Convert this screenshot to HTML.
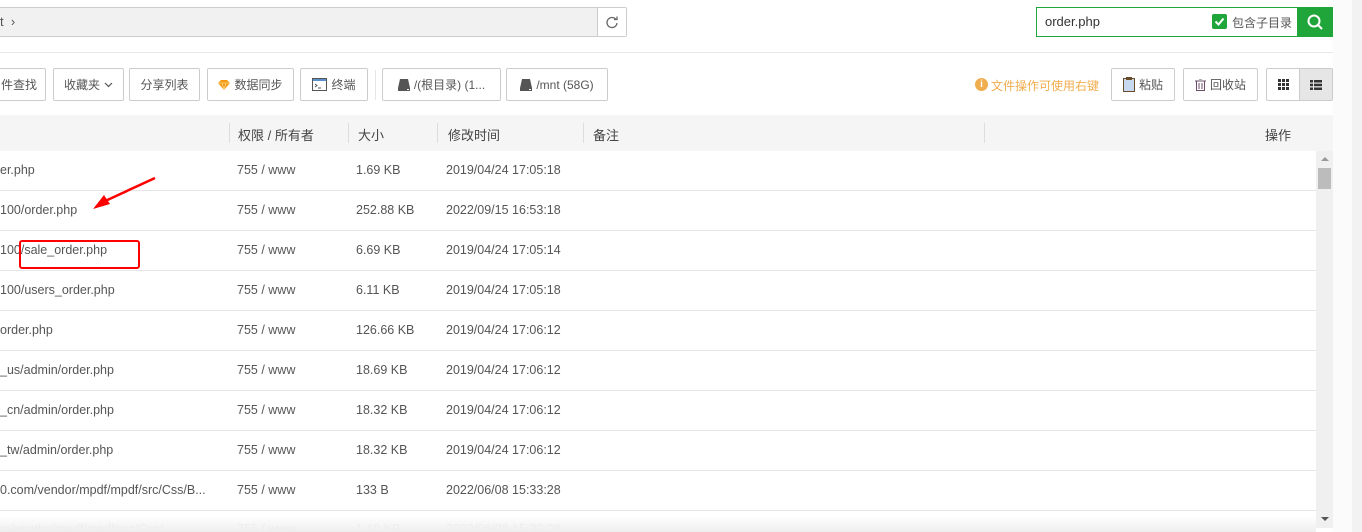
<!DOCTYPE html>
<html><head><meta charset="utf-8"><style>
*{box-sizing:border-box;margin:0;padding:0}
html,body{width:1362px;height:532px;overflow:hidden}
body{background:#fff;font-family:"Liberation Sans","Noto Sans CJK SC",sans-serif;font-size:12px;color:#555;position:relative}
.a{position:absolute}
.btn{position:absolute;top:68px;height:33px;border:1px solid #ccc;border-radius:2px;background:#fff;display:flex;align-items:center;justify-content:center;font-size:12px;color:#555;white-space:nowrap;gap:4px}
.row{position:absolute;left:0;width:1316px;height:40px;border-bottom:1px solid #e6e6e6;font-size:12.5px;color:#555}
.row span{position:absolute;top:12px;white-space:nowrap}
.hdr{position:absolute;top:125px;font-size:13px;color:#444}
.vs{position:absolute;top:123px;width:1px;height:20px;background:#ddd}
</style></head><body>
<div class="a" style="left:-2px;top:7px;width:629px;height:30px;background:#f1f1f1;border:1px solid #ccc;border-radius:2px"></div>
<div class="a" style="left:0;top:14px;font-size:13px;color:#555">t&nbsp;&nbsp;›</div>
<div class="a" style="left:597px;top:8px;width:29px;height:28px;background:#fff;border-left:1px solid #ccc;display:flex;align-items:center;justify-content:center">
<svg width="14" height="14" viewBox="0 0 14 14"><path d="M11 4.5A5 5 0 1 0 12 8" fill="none" stroke="#666" stroke-width="1.3"/><path d="M9 4.5h3V1.5" fill="none" stroke="#666" stroke-width="1.3"/></svg></div>
<div class="a" style="left:1036px;top:7px;width:262px;height:30px;border:1px solid #20a53a;background:#fff"></div>
<div class="a" style="left:1045px;top:14px;font-size:13px;color:#333">order.php</div>
<div class="a" style="left:1212px;top:14px;width:15px;height:15px;background:#20a53a;border-radius:2px"><svg width="15" height="15"><path d="M3.5 7.5l3 3 5-6" fill="none" stroke="#fff" stroke-width="2"/></svg></div>
<div class="a" style="left:1232px;top:14px;font-size:12px;color:#555">包含子目录</div>
<div class="a" style="left:1297px;top:7px;width:36px;height:30px;background:#20a53a"><svg width="36" height="30"><circle cx="17" cy="14" r="5.5" fill="none" stroke="#fff" stroke-width="2"/><path d="M21 18l4 4" stroke="#fff" stroke-width="2"/></svg></div>
<div class="a" style="left:0;top:52px;width:1333px;height:1px;background:#e8e8e8"></div>
<div class="btn" style="left:-10px;width:56px;justify-content:flex-end;padding-right:8px">件查找</div>
<div class="btn" style="left:53px;width:71px">收藏夹 <svg width="9" height="6"><path d="M1 1l3.5 3.5L8 1" fill="none" stroke="#555" stroke-width="1.2"/></svg></div>
<div class="btn" style="left:129px;width:71px">分享列表</div>
<div class="btn" style="left:207px;width:87px"><svg width="12" height="10"><path d="M0 3l3-3h6l3 3-6 7z" fill="#f39c12"/><path d="M0 3h12M4 3l2 7 2-7" stroke="#fbd38d" stroke-width=".8" fill="none"/></svg>数据同步</div>
<div class="btn" style="left:300px;width:68px"><svg width="15" height="13"><rect x=".5" y=".5" width="14" height="12" fill="#fff" stroke="#555"/><rect x="1" y="1" width="13" height="2" fill="#5b8fc8"/><path d="M3 6l2 1.5L3 9M6 10h3" stroke="#555" fill="none"/></svg> 终端</div>
<div class="a" style="left:375px;top:70px;width:1px;height:30px;background:#e6e6e6"></div>
<div class="btn" style="left:382px;width:119px"><svg width="12" height="12"><path d="M2 0h8l2 9H0z" fill="#555"/><rect y="9" width="12" height="3" fill="#555"/><rect x="9" y="10" width="2" height="1" fill="#fff"/></svg>/(根目录) (1...</div>
<div class="btn" style="left:506px;width:102px"><svg width="12" height="12"><path d="M2 0h8l2 9H0z" fill="#555"/><rect y="9" width="12" height="3" fill="#555"/><rect x="9" y="10" width="2" height="1" fill="#fff"/></svg>/mnt (58G)</div>
<div class="a" style="left:975px;top:78px;width:13px;height:13px;border-radius:50%;background:#f0ad4e;color:#fff;font-size:10px;font-weight:bold;text-align:center;line-height:13px">i</div>
<div class="a" style="left:991px;top:77px;color:#f0ad4e;font-size:12px">文件操作可使用右键</div>
<div class="btn" style="left:1111px;width:64px"><svg width="12" height="15"><rect x=".5" y="1.5" width="11" height="13" fill="#c6d9ef" stroke="#6b4c2a"/><rect x="3" y="0" width="6" height="3" fill="#6b4c2a"/></svg>粘贴</div>
<div class="btn" style="left:1183px;width:75px"><svg width="11" height="12"><path d="M0 2h11M4 0h3M1.5 2.5v9h8v-9M4 4v6M7 4v6" stroke="#6b4c6a" fill="none"/></svg> 回收站</div>
<div class="btn" style="left:1266px;width:34px;border-radius:2px 0 0 2px"><svg width="11" height="11" fill="#333"><rect width="3" height="3"/><rect x="4" width="3" height="3"/><rect x="8" width="3" height="3"/><rect y="4" width="3" height="3"/><rect x="4" y="4" width="3" height="3"/><rect x="8" y="4" width="3" height="3"/><rect y="8" width="3" height="3"/><rect x="4" y="8" width="3" height="3"/><rect x="8" y="8" width="3" height="3"/></svg></div>
<div class="btn" style="left:1299px;width:34px;background:#e6e6e6;border-radius:0 2px 2px 0"><svg width="12" height="10" fill="#333"><rect width="3" height="2.5"/><rect x="4" width="8" height="2.5"/><rect y="3.7" width="3" height="2.5"/><rect x="4" y="3.7" width="8" height="2.5"/><rect y="7.5" width="3" height="2.5"/><rect x="4" y="7.5" width="8" height="2.5"/></svg></div>
<div class="a" style="left:0;top:115px;width:1333px;height:36px;background:#f5f5f5"></div>
<div class="vs" style="left:229px"></div><div class="vs" style="left:348px"></div><div class="vs" style="left:437px"></div><div class="vs" style="left:583px"></div><div class="vs" style="left:984px"></div>
<div class="hdr" style="left:238px">权限 / 所有者</div>
<div class="hdr" style="left:358px">大小</div>
<div class="hdr" style="left:448px">修改时间</div>
<div class="hdr" style="left:593px">备注</div>
<div class="hdr" style="left:1265px">操作</div>
<div class="row" style="top:151px"><span style="left:0">er.php</span><span style="left:237px">755 / www</span><span style="left:356px">1.69 KB</span><span style="left:446px">2019/04/24 17:05:18</span></div>
<div class="row" style="top:191px"><span style="left:0">100/order.php</span><span style="left:237px">755 / www</span><span style="left:356px">252.88 KB</span><span style="left:446px">2022/09/15 16:53:18</span></div>
<div class="row" style="top:231px"><span style="left:0">100/sale_order.php</span><span style="left:237px">755 / www</span><span style="left:356px">6.69 KB</span><span style="left:446px">2019/04/24 17:05:14</span></div>
<div class="row" style="top:271px"><span style="left:0">100/users_order.php</span><span style="left:237px">755 / www</span><span style="left:356px">6.11 KB</span><span style="left:446px">2019/04/24 17:05:18</span></div>
<div class="row" style="top:311px"><span style="left:0">order.php</span><span style="left:237px">755 / www</span><span style="left:356px">126.66 KB</span><span style="left:446px">2019/04/24 17:06:12</span></div>
<div class="row" style="top:351px"><span style="left:0">_us/admin/order.php</span><span style="left:237px">755 / www</span><span style="left:356px">18.69 KB</span><span style="left:446px">2019/04/24 17:06:12</span></div>
<div class="row" style="top:391px"><span style="left:0">_cn/admin/order.php</span><span style="left:237px">755 / www</span><span style="left:356px">18.32 KB</span><span style="left:446px">2019/04/24 17:06:12</span></div>
<div class="row" style="top:431px"><span style="left:0">_tw/admin/order.php</span><span style="left:237px">755 / www</span><span style="left:356px">18.32 KB</span><span style="left:446px">2019/04/24 17:06:12</span></div>
<div class="row" style="top:471px"><span style="left:0">0.com/vendor/mpdf/mpdf/src/Css/B...</span><span style="left:237px">755 / www</span><span style="left:356px">133 B</span><span style="left:446px">2022/06/08 15:33:28</span></div>
<div class="row" style="top:511px;height:21px;overflow:hidden;border:none;color:#ccc"><span style="left:0;top:11px">m/vendor/mpdf/mpdf/src/Css/...</span><span style="left:237px;top:11px">755 / www</span><span style="left:356px;top:11px">1.10 KB</span><span style="left:446px;top:11px">2022/06/08 15:33:28</span></div>
<div class="a" style="left:0;top:516px;width:1316px;height:16px;background:linear-gradient(rgba(255,255,255,.6),#eee)"></div>
<div class="a" style="left:1316px;top:151px;width:17px;height:377px;background:#f0f0f0"></div>
<div class="a" style="left:1321px;top:157px;width:0;height:0;border-left:4px solid transparent;border-right:4px solid transparent;border-bottom:4px solid #999"></div>
<div class="a" style="left:1318px;top:168px;width:13px;height:21px;background:#bcbcbc"></div>
<div class="a" style="left:1321px;top:517px;width:0;height:0;border-left:4px solid transparent;border-right:4px solid transparent;border-top:4px solid #555"></div>
<div class="a" style="left:1333px;top:0;width:19px;height:532px;background:#fbfbfb"></div>
<div class="a" style="left:1352px;top:0;width:10px;height:532px;background:#f2f2f2"></div>
<svg class="a" style="left:0;top:0" width="1362" height="532"><path d="M155 178L103 202" stroke="#f00" stroke-width="2.5"/><path d="M93 209L104 195L110 204Z" fill="#f00"/><rect x="20" y="241" width="119" height="27" rx="2" fill="none" stroke="#f00" stroke-width="2"/></svg>
</body></html>
